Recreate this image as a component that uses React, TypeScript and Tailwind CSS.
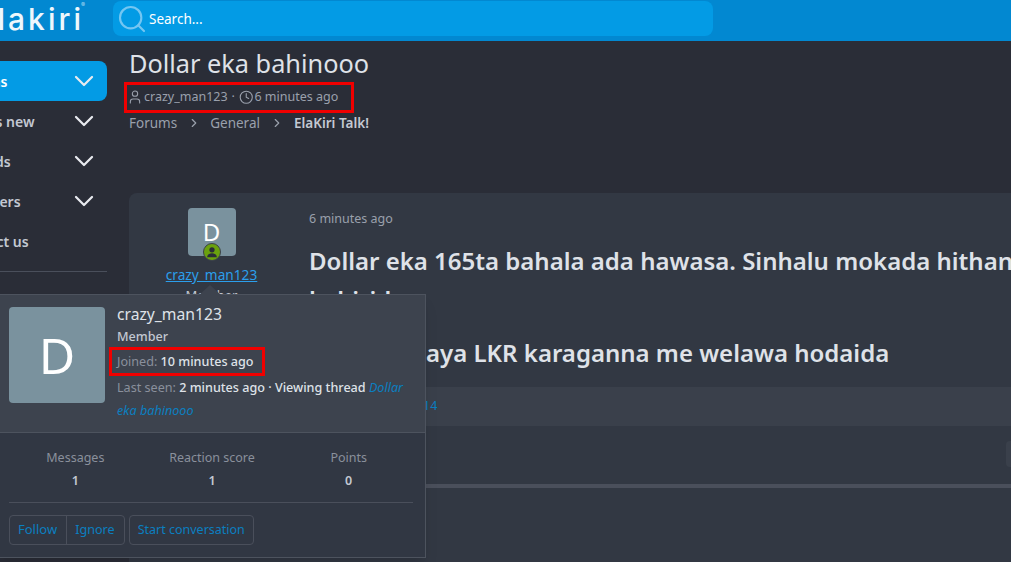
import { ChevronDown, ChevronRight, Clock, Search, User } from "lucide-react";

const navItems = [
  { label: "Forums", active: true, chevron: true },
  { label: "What's new", chevron: true },
  { label: "Threads", chevron: true },
  { label: "Members", chevron: true },
  { label: "Contact us" },
];

const stats = [
  { label: "Messages", value: "1" },
  { label: "Reaction score", value: "1" },
  { label: "Points", value: "0" },
];

function Sidebar() {
  return (
    <aside className="w-[167px] shrink-0 -ml-[60px] pt-5 flex flex-col">
      {navItems.map((item) => (
        <div
          key={item.label}
          className={`h-10 flex items-center justify-between pl-4 pr-[7px] rounded-lg text-[14px] font-semibold ${
            item.active ? "bg-[#039be5] text-white" : "text-[#c3c8d2]"
          }`}
        >
          <span className="whitespace-nowrap">{item.label}</span>
          {item.chevron && <ChevronDown className="w-8 h-8 text-[#e8eaef]" strokeWidth={1.7} />}
        </div>
      ))}
      <div className="mt-[10px] border-t border-[#4a4f5b]" />
    </aside>
  );
}

function UserPopup() {
  return (
    <div className="absolute left-[-1px] top-[294px] w-[427px] h-[264px] border border-[#4d535e] bg-[#313743] z-20 shadow-lg">
      <div className="absolute -top-[10px] left-[199px] w-0 h-0 border-x-[11px] border-x-transparent border-b-[10px] border-b-[#3d434e]" />
      <div className="h-[138px] bg-[#3d434e] border-b border-[#4d535e] pl-[9px] pt-[12px] flex gap-[12px]">
        <div className="w-[96px] h-[96px] shrink-0 rounded-[4px] bg-[#7a929e] flex items-center justify-center text-white text-[50px] leading-none">
          D
        </div>
        <div className="flex flex-col min-w-0 text-[12.6px]">
          <div className="-mt-px text-[15.7px] leading-[16px] text-[#dfe2e8]">crazy_man123</div>
          <div className="mt-2 font-medium leading-[14px] text-[#c3c8d2]">Member</div>
          <div className="mt-[3px] -ml-[8px] self-start w-[156px] h-[29px] border-[3px] border-[#f00000] pl-[5px] pt-px flex items-center whitespace-nowrap">
            <span className="text-[#8a909c]">Joined:&nbsp;</span>
            <span className="font-medium text-[#dfe2e8]">10 minutes ago</span>
          </div>
          <div className="w-[296px] leading-[23px] text-[#dfe2e8] font-medium">
            <span className="text-[#8a909c] font-normal">Last seen: </span>2 minutes ago · Viewing thread{" "}
            <span className="italic font-normal text-[#0b7fc0]">Dollar eka bahinooo</span>
          </div>
        </div>
      </div>
      <div className="pl-[9px] pr-3">
        <div className="h-[70px] pt-4 border-b border-[#4a4f5b]">
          <div className="grid grid-cols-3 w-[410px] -ml-[2px] text-center text-[12.5px]">
            {stats.map((s) => (
              <div key={s.label} className="flex flex-col gap-[5px]">
                <span className="text-[#8a909c] leading-[18px]">{s.label}</span>
                <span className="text-[#c3c8d2] font-semibold leading-[18px]">{s.value}</span>
              </div>
            ))}
          </div>
        </div>
        <div className="mt-[12px] flex gap-1 text-[#0b7fc0]">
          <div className="flex h-[30px] border border-[#4a4f5b] rounded-[4px] items-center">
            <span className="pl-2 pr-[9px] h-full flex items-center border-r border-[#4a4f5b] text-[13px]">Follow</span>
            <span className="pl-2 pr-[9px] text-[12.6px]">Ignore</span>
          </div>
          <div className="flex h-[30px] px-2 border border-[#4a4f5b] rounded-[4px] items-center text-[12.5px]">Start conversation</div>
        </div>
      </div>
    </div>
  );
}

export default function App() {
  return (
    <div
      className="relative w-[1011px] h-[562px] overflow-hidden bg-[#2a2d37] text-[#dfe2e8]"
      style={{ fontFamily: '"Noto Sans", "Open Sans", sans-serif' }}
    >
      <header className="h-[41px] bg-[#0288d1] flex items-start overflow-hidden">
        <div
          className="relative w-[113px] shrink-0 overflow-hidden flex justify-end pr-[29px] pt-[3px] text-[30px] leading-[32px] font-medium tracking-[3px] text-[#eef7fc] whitespace-nowrap"
          style={{ fontFamily: "Inter, sans-serif" }}
        >
          Elakiri
          <span className="absolute left-[81px] top-[1px] text-[6px] leading-[8px] tracking-normal text-[#a9d8f2]">®</span>
        </div>
        <div className="mt-[1px] w-[600px] h-[35px] rounded-lg bg-[#039be5] flex items-center gap-[1px] pl-[3px] pt-px text-[13.5px] text-white">
          <Search className="w-8 h-8 text-[#74c6f2]" strokeWidth={1.6} />
          Search...
        </div>
      </header>

      <div className="flex gap-[22px]">
        <Sidebar />
        <main className="flex-1 min-w-0">
          <h1 className="pt-[4px] text-[25.3px] leading-[36px] font-normal text-[#dfe2e8]">Dollar eka bahinooo</h1>
          <div className="mt-[1px] -ml-[5px] w-[230px] h-[31px] border-[3px] border-[#f00000] pb-px flex items-center text-[12.5px] text-[#9aa0ac] whitespace-nowrap">
            <User className="w-4 h-4 mr-[1px]" strokeWidth={1.6} />
            <span>crazy_man123</span>
            <span className="mx-[4px]">·</span>
            <Clock className="w-[14.5px] h-[14.5px] mr-[1px]" strokeWidth={1.8} />
            <span>6 minutes ago</span>
          </div>
          <nav className="flex items-center h-[20px] text-[13.5px] text-[#9aa0ac]">
            Forums
            <ChevronRight className="w-[14px] h-[14px] mx-[9.5px]" />
            General
            <ChevronRight className="w-[14px] h-[14px] mx-[10px]" />
            <span className="font-semibold text-[#c3c8d2]">ElaKiri Talk!</span>
          </nav>

          <article className="mt-[60px] w-full h-[400px] rounded-tl-lg bg-[#323843] flex">
            <div className="w-[165px] shrink-0 pt-[15px] flex flex-col items-center">
              <div className="relative w-[48px] h-[48px] rounded-[4px] bg-[#7a929e] flex items-center justify-center text-white text-[24px]">
                D
                <span className="absolute -bottom-[5px] left-[15px] w-[18px] h-[18px] rounded-full bg-[#6aa10e] border border-[#3b414c] flex items-center justify-center">
                  <svg viewBox="0 0 16 16" className="w-[14px] h-[14px]" fill="#2a2d37">
                    <circle cx="8" cy="5.5" r="3" />
                    <path d="M2.500 14c0-3 2.500-4.500 5.500-4.500s5.500 1.500 5.500 4.500z" />
                  </svg>
                </span>
              </div>
              <a className="mt-[9px] text-[13.7px] leading-[20px] text-[#2b9fec] underline">crazy_man123</a>
              <span className="mt-[1px] text-[13px] text-[#c3c8d2]">Member</span>
            </div>
            <div className="flex-1 min-w-0 flex flex-col">
              <div className="pl-[15px] pt-[17px] text-[12.5px] leading-[18px] text-[#9aa0ac]">6 minutes ago</div>
              <div className="pl-[15px] mt-[15px] text-[24px] leading-[35px] font-semibold text-[#dfe2e8]">
                <p className="whitespace-nowrap">Dollar eka 165ta bahala ada hawasa. Sinhalu mokada hithan</p>
                <p className="mt-1">kabirida</p>
                <p className="mt-[18px] pl-[117px]">aya LKR karaganna me welawa hodaida</p>
              </div>
              <div className="mt-[17px] h-[39px] bg-[#3a404b] flex items-center pl-[129px] text-[12.5px] text-[#0b7fc0]">14</div>
              <div className="h-[58px] flex justify-end items-start pt-[15px]">
                <div className="w-[5px] h-[26px] rounded-l-[4px] bg-[#3a404b]" />
              </div>
              <div className="h-[4px] bg-[#4a4f5b]" />
            </div>
          </article>
        </main>
      </div>
      <UserPopup />
    </div>
  );
}
